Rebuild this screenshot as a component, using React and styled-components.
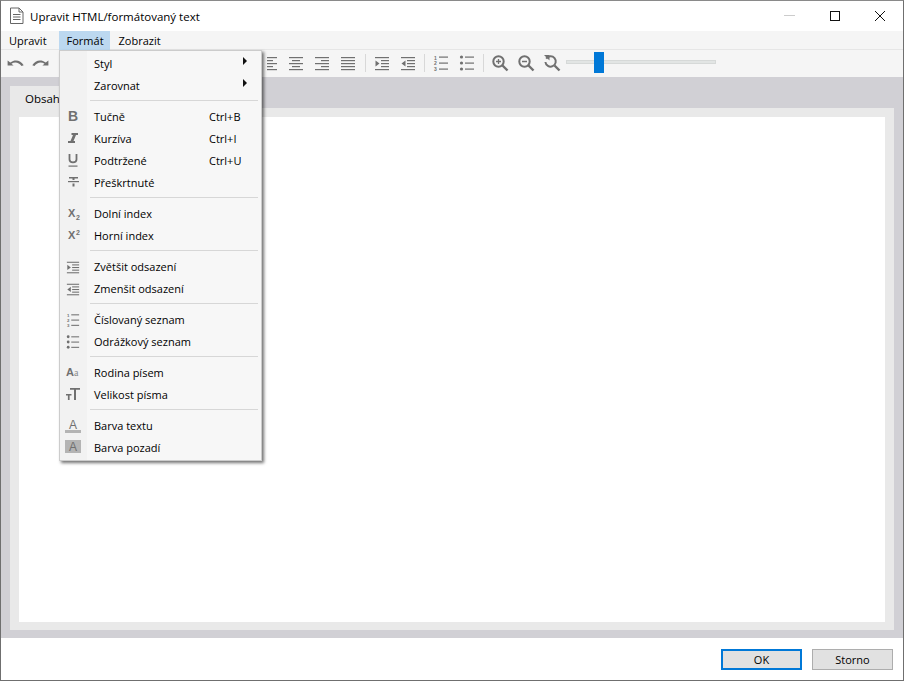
import React from 'react';
import styled, { createGlobalStyle } from 'styled-components';

const GlobalStyle = createGlobalStyle`
  html, body {
    margin: 0;
    padding: 0;
    background: #fff;
  }
  body {
    font-family: "Open Sans", "Noto Sans", "Liberation Sans", sans-serif;
    font-size: 11px;
    color: #000;
  }
`;

const Window = styled.div`
  position: relative;
  box-sizing: border-box;
  width: 904px;
  height: 681px;
  display: flex;
  flex-direction: column;
  background: #fff;
  border: 1px solid #6f6f6f;
  border-top-color: #8a8a8a;
  overflow: hidden;
`;

const TitleBar = styled.div`
  height: 30px;
  flex: none;
  display: flex;
  align-items: center;
  padding-left: 8px;
  gap: 5px;
`;

const Title = styled.div`
  flex: 1;
  font-size: 11.5px;
`;

const WinButtons = styled.div`
  display: flex;
  margin-right: 1px;
`;

const WinButton = styled.div`
  width: 45px;
  height: 30px;
  display: flex;
  align-items: center;
  justify-content: center;
`;

const MenuBar = styled.div`
  position: relative;
  z-index: 1;
  height: 18px;
  flex: none;
  display: flex;
  background: #f5f5f5;
`;

const MenuTitle = styled.div`
  height: ${({ $open }) => ($open ? '19px' : '18px')};
  padding: 0 ${({ $open }) => ($open ? '6px' : '8px')} 0 8px;
  display: flex;
  align-items: center;
  background: ${({ $open }) => ($open ? '#bcd8f0' : 'transparent')};
  &:first-child {
    margin-right: 4px;
  }
  &:last-child {
    margin-left: 1px;
  }
`;

const Toolbar = styled.div`
  height: 27px;
  flex: none;
  display: flex;
  align-items: flex-start;
  padding-left: 1px;
  background: #f5f5f5;
  border-top: 1px solid #e6e6e6;
`;

const ToolButton = styled.div`
  width: 26px;
  height: 26px;
  display: flex;
  align-items: center;
  justify-content: center;
`;

const ToolSpacer = styled.div`
  width: 204px;
`;

const ToolSep = styled.div`
  width: 1px;
  height: 18px;
  margin: 4px 3px 0;
  background: #d8d8d8;
`;

const Slider = styled.div`
  position: relative;
  width: 150px;
  height: 4px;
  margin: 10px 0 0 1px;
  background: #e2e5e4;
  border: 1px solid #d6d9d8;
  box-sizing: border-box;
`;

const SliderThumb = styled.div`
  position: absolute;
  left: 27px;
  top: -9px;
  width: 10px;
  height: 21px;
  background: #0078d7;
`;

const Body = styled.div`
  flex: 1;
  display: flex;
  flex-direction: column;
  padding: 9px 9px 8px;
  background: #d1d0d5;
`;

const TabStrip = styled.div`
  height: 22px;
  flex: none;
  display: flex;
`;

const Tab = styled.div`
  width: 76px;
  padding: 2px 0 0 15px;
  box-sizing: border-box;
  display: flex;
  align-items: center;
  font-size: 11.5px;
  background: #e9e9e9;
`;

const TabPanel = styled.div`
  flex: 1;
  display: flex;
  padding: 9px;
  padding-bottom: 8px;
  background: #e9e9e9;
`;

const Editor = styled.div`
  flex: 1;
  background: #fff;
`;

const Footer = styled.div`
  height: 42px;
  flex: none;
  display: flex;
  justify-content: flex-end;
  align-items: flex-start;
  gap: 10px;
  padding: 11px 10px 0 0;
  box-sizing: border-box;
`;

const DialogButton = styled.div`
  box-sizing: border-box;
  width: 81px;
  height: 21px;
  display: flex;
  align-items: center;
  justify-content: center;
  background: #e1e1e1;
  border: ${({ $primary }) => ($primary ? '2px solid #0078d7' : '1px solid #adadad')};
`;

const Menu = styled.div`
  position: absolute;
  left: 58px;
  top: 49px;
  box-sizing: border-box;
  width: 203px;
  padding: 1px 2px 2px;
  display: flex;
  flex-direction: column;
  background: linear-gradient(to right, #f2f2f2 27px, #f7f7f7 27px);
  border: 1px solid #cccccc;
  box-shadow: 2px 2px 3px rgba(0, 0, 0, 0.55);
  z-index: 2;
`;

const MenuRow = styled.div`
  height: 22px;
  display: flex;
  align-items: center;
`;

const IconCell = styled.div`
  width: 22px;
  margin-right: 10px;
  height: 22px;
  padding-top: 2px;
  box-sizing: border-box;
  flex: none;
  display: flex;
  align-items: center;
  justify-content: center;
  svg.small {
    width: 14px;
    height: 14px;
  }
`;

const Label = styled.div`
  flex: 1;
`;

const Shortcut = styled.div`
  width: 50px;
  flex: none;
`;

const Arrow = styled.div`
  width: 0;
  height: 0;
  margin-right: 12px;
  margin-top: -4px;
  border-left: 4px solid #111;
  border-top: 4px solid transparent;
  border-bottom: 4px solid transparent;
`;

const Separator = styled.div`
  height: 9px;
  margin: 0 1px 0 28px;
  padding-top: 4px;
  box-sizing: border-box;
  &::before {
    content: '';
    display: block;
    height: 1px;
    background: #d7d7d7;
  }
`;

const GRAY = '#707070';

const Glyph = ({ children, w = 16, h = 16, small }) => (
  <svg className={small ? 'small' : undefined} width={w} height={h} viewBox={`0 0 ${w} ${h}`} fill="none">
    {children}
  </svg>
);

const Lines = ({ rows, color = GRAY }) =>
  rows.map(([x, y, w], i) => <rect key={i} x={x} y={y} width={w} height={1.2} fill={color} />);

const glyphText = { fontFamily: '"Liberation Sans", sans-serif', fontWeight: 700, fill: GRAY };

const AlignLeft = () => <Glyph><Lines rows={[[4, 2, 10], [4, 5, 6], [4, 8, 10], [4, 11, 6], [4, 14, 10]]} /></Glyph>;
const AlignCenter = () => <Glyph><Lines rows={[[0, 2, 14], [3, 5, 8], [0, 8, 14], [3, 11, 8], [0, 14, 14]]} /></Glyph>;
const AlignRight = () => <Glyph><Lines rows={[[0, 2, 14], [6, 5, 8], [0, 8, 14], [6, 11, 8], [0, 14, 14]]} /></Glyph>;
const AlignJustify = () => <Glyph><Lines rows={[[0, 2, 14], [0, 5, 14], [0, 8, 14], [0, 11, 14], [0, 14, 14]]} /></Glyph>;

const Indent = ({ small }) => (
  <Glyph small={small}>
    <Lines rows={[[1, 2, 14], [7, 5, 8], [7, 8, 8], [7, 11, 8], [1, 14, 14]]} />
    <path d="M1.5 5.5 L5.5 8.5 L1.5 11.5 Z" fill={GRAY} />
  </Glyph>
);
const Outdent = ({ small }) => (
  <Glyph small={small}>
    <Lines rows={[[1, 2, 14], [7, 5, 8], [7, 8, 8], [7, 11, 8], [1, 14, 14]]} />
    <path d="M5.5 5.5 L1.5 8.5 L5.5 11.5 Z" fill={GRAY} />
  </Glyph>
);
const Numbered = ({ small }) => (
  <Glyph small={small}>
    <Lines rows={[[6, 1.5, 9], [6, 7.5, 9], [6, 13.5, 9]]} />
    <text x="1" y="4.5" fontSize="5" style={glyphText}>1</text>
    <text x="1" y="10" fontSize="5" style={glyphText}>2</text>
    <text x="1" y="15.5" fontSize="5" style={glyphText}>3</text>
  </Glyph>
);
const Bullets = ({ small }) => (
  <Glyph small={small}>
    <Lines rows={[[6, 1.5, 9], [6, 7.5, 9], [6, 13.5, 9]]} />
    <circle cx="2.5" cy="2" r="1.6" fill={GRAY} />
    <circle cx="2.5" cy="8" r="1.6" fill={GRAY} />
    <circle cx="2.5" cy="14" r="1.6" fill={GRAY} />
  </Glyph>
);

const undoPath = 'M3 4.5 V9.5 H8 L6.2 7.7 C9 5.5 12.5 6.3 14.6 10 L16.4 9.2 C14 4.4 9.3 2.9 5.2 6.6 Z';

const Undo = () => (
  <Glyph w={18} h={14}>
    <path d={undoPath} fill={GRAY} transform="translate(-2 0) scale(1.2 1)" />
  </Glyph>
);
const Redo = () => (
  <Glyph w={18} h={14}>
    <g transform="matrix(-1 0 0 1 18 0)">
      <path d={undoPath} fill={GRAY} transform="translate(-2 0) scale(1.2 1)" />
    </g>
  </Glyph>
);
const ZoomGlyph = ({ children }) => (
  <Glyph w={18} h={18}>
    <circle cx="7.5" cy="7.5" r="5.2" stroke={GRAY} strokeWidth="2" />
    <path d="M11.5 11.5 L16.5 16.5" stroke={GRAY} strokeWidth="2.4" />
    {children}
  </Glyph>
);
const ZoomReset = () => (
  <Glyph w={18} h={18}>
    <path d="M3.2 4.6 A5.2 5.2 0 1 1 2.4 8" stroke={GRAY} strokeWidth="2" />
    <path d="M1 1 H6.5 V6.5 Z" fill={GRAY} />
    <path d="M11.5 11.5 L16.5 16.5" stroke={GRAY} strokeWidth="2.4" />
  </Glyph>
);
const DocIcon = () => (
  <svg width="16" height="18" viewBox="0 0 16 18" fill="none">
    <path d="M1.5 1 H10 L14 5 V16.5 H1.5 Z M10 1 V5 H14" stroke="#666" fill="#fff" />
    <path d="M4 7.5 H11.5 M4 10 H11.5 M4 12.5 H11.5" stroke="#666" />
  </svg>
);

const formatIcons = {
  bold: <Glyph><text x="3" y="12" fontSize="14" style={glyphText}>B</text></Glyph>,
  italic: (
    <Glyph>
      <path d="M6.5 2 H13 V4 H11 L8.5 10 H10 V12 H3 V10 H5.5 L8 4 H6.5 Z" fill={GRAY} />
    </Glyph>
  ),
  underline: (
    <Glyph>
      <path d="M4.5 1 V6.5 C4.5 10.2 11.5 10.2 11.5 6.5 V1" stroke={GRAY} strokeWidth="1.8" />
      <rect x="3.5" y="12.5" width="9" height="1.2" fill={GRAY} />
    </Glyph>
  ),
  strike: (
    <Glyph>
      <rect x="3" y="6" width="11" height="1.2" fill={GRAY} />
      <rect x="4" y="2" width="9" height="1.5" fill={GRAY} />
      <rect x="7.5" y="2" width="2" height="3" fill={GRAY} />
      <rect x="7.5" y="8.5" width="2" height="3" fill={GRAY} />
    </Glyph>
  ),
  sub: (
    <Glyph>
      <text x="3" y="11" fontSize="11" style={glyphText}>X</text>
      <text x="11" y="14" fontSize="7" style={glyphText}>2</text>
    </Glyph>
  ),
  sup: (
    <Glyph>
      <text x="3" y="11" fontSize="11" style={glyphText}>X</text>
      <text x="11" y="7" fontSize="7" style={glyphText}>2</text>
    </Glyph>
  ),
  indent: <Indent small />,
  outdent: <Outdent small />,
  numbered: <Numbered small />,
  bullets: <Bullets small />,
  family: (
    <Glyph>
      <text x="1" y="11" fontSize="11" style={glyphText}>A</text>
      <text x="9" y="11" fontSize="10" style={{ ...glyphText, fontWeight: 400, fontFamily: '"Liberation Serif", serif', fill: '#8a8a8a' }}>a</text>
    </Glyph>
  ),
  size: (
    <Glyph>
      <path d="M5 1 H15 V2.8 H11 V13 H9 V2.8 H5 Z" fill={GRAY} />
      <path d="M1 7 H6.5 V8.6 H4.6 V13 H2.9 V8.6 H1 Z" fill={GRAY} />
    </Glyph>
  ),
  color: (
    <Glyph>
      <text x="4" y="11" fontSize="12" style={{ ...glyphText, fontWeight: 400 }}>A</text>
      <rect x="0" y="12" width="16" height="3" fill="#b4b4b4" />
    </Glyph>
  ),
  background: (
    <Glyph>
      <rect x="0" y="0" width="16" height="13" fill="#b4b4b4" />
      <text x="4" y="11" fontSize="12" style={{ ...glyphText, fontWeight: 400 }}>A</text>
    </Glyph>
  ),
};

const menuGroups = [
  [
    { label: 'Styl', arrow: true },
    { label: 'Zarovnat', arrow: true },
  ],
  [
    { label: 'Tučně', icon: 'bold', shortcut: 'Ctrl+B' },
    { label: 'Kurzíva', icon: 'italic', shortcut: 'Ctrl+I' },
    { label: 'Podtržené', icon: 'underline', shortcut: 'Ctrl+U' },
    { label: 'Přeškrtnuté', icon: 'strike' },
  ],
  [
    { label: 'Dolní index', icon: 'sub' },
    { label: 'Horní index', icon: 'sup' },
  ],
  [
    { label: 'Zvětšit odsazení', icon: 'indent' },
    { label: 'Zmenšit odsazení', icon: 'outdent' },
  ],
  [
    { label: 'Číslovaný seznam', icon: 'numbered' },
    { label: 'Odrážkový seznam', icon: 'bullets' },
  ],
  [
    { label: 'Rodina písem', icon: 'family' },
    { label: 'Velikost písma', icon: 'size' },
  ],
  [
    { label: 'Barva textu', icon: 'color' },
    { label: 'Barva pozadí', icon: 'background' },
  ],
];

const App = () => (
  <>
    <GlobalStyle />
    <Window>
      <TitleBar>
        <DocIcon />
        <Title>Upravit HTML/formátovaný text</Title>
        <WinButtons>
          <WinButton>
            <svg width="12" height="12"><rect x="0" y="5" width="11" height="1" fill="#ccc" /></svg>
          </WinButton>
          <WinButton>
            <svg width="12" height="12"><rect x="1.5" y="1.5" width="9" height="9" fill="none" stroke="#111" /></svg>
          </WinButton>
          <WinButton>
            <svg width="12" height="12"><path d="M1 1 L11 11 M11 1 L1 11" stroke="#111" /></svg>
          </WinButton>
        </WinButtons>
      </TitleBar>
      <MenuBar>
        <MenuTitle>Upravit</MenuTitle>
        <MenuTitle $open>Formát</MenuTitle>
        <MenuTitle>Zobrazit</MenuTitle>
      </MenuBar>
      <Toolbar>
        <ToolButton><Undo /></ToolButton>
        <ToolButton><Redo /></ToolButton>
        <ToolSpacer />
        <ToolButton><AlignLeft /></ToolButton>
        <ToolButton><AlignCenter /></ToolButton>
        <ToolButton><AlignRight /></ToolButton>
        <ToolButton><AlignJustify /></ToolButton>
        <ToolSep />
        <ToolButton><Indent /></ToolButton>
        <ToolButton><Outdent /></ToolButton>
        <ToolSep />
        <ToolButton><Numbered /></ToolButton>
        <ToolButton><Bullets /></ToolButton>
        <ToolSep />
        <ToolButton><ZoomGlyph><path d="M7.5 5 V10 M5 7.5 H10" stroke={GRAY} strokeWidth="1.3" /></ZoomGlyph></ToolButton>
        <ToolButton><ZoomGlyph><path d="M5 7.5 H10" stroke={GRAY} strokeWidth="1.5" /></ZoomGlyph></ToolButton>
        <ToolButton><ZoomReset /></ToolButton>
        <Slider><SliderThumb /></Slider>
      </Toolbar>
      <Body>
        <TabStrip><Tab>Obsah</Tab></TabStrip>
        <TabPanel><Editor /></TabPanel>
      </Body>
      <Footer>
        <DialogButton $primary>OK</DialogButton>
        <DialogButton>Storno</DialogButton>
      </Footer>
      <Menu>
        {menuGroups.map((group, g) => (
          <React.Fragment key={g}>
            {g > 0 && <Separator />}
            {group.map((item) => (
              <MenuRow key={item.label}>
                <IconCell>{item.icon && formatIcons[item.icon]}</IconCell>
                <Label>{item.label}</Label>
                {item.shortcut && <Shortcut>{item.shortcut}</Shortcut>}
                {item.arrow && <Arrow />}
              </MenuRow>
            ))}
          </React.Fragment>
        ))}
      </Menu>
    </Window>
  </>
);

export default App;
